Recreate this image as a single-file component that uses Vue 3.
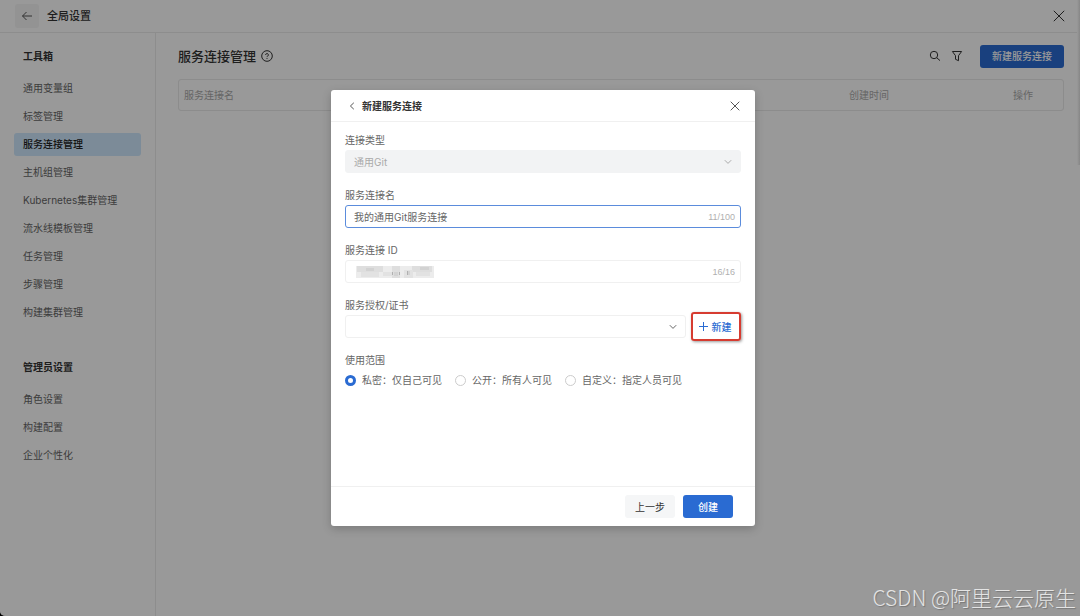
<script setup>
import { ref } from 'vue'

const tools = [
  '通用变量组',
  '标签管理',
  '服务连接管理',
  '主机组管理',
  'Kubernetes集群管理',
  '流水线模板管理',
  '任务管理',
  '步骤管理',
  '构建集群管理',
]
const admin = ['角色设置', '构建配置', '企业个性化']
const active = '服务连接管理'

const name = ref('我的通用Git服务连接')
const scope = ref('private')
const scopes = [
  { value: 'private', label: '私密：仅自己可见' },
  { value: 'public', label: '公开：所有人可见' },
  { value: 'custom', label: '自定义：指定人员可见' },
]
</script>

<template>
  <div class="screen">
    <div class="page">
      <header class="topbar">
        <button class="back" type="button" aria-label="返回">
          <svg width="12" height="12" viewBox="0 0 12 12"><path d="M11 6H1.5M5.5 2 1.5 6l4 4" /></svg>
        </button>
        <h1>全局设置</h1>
        <button class="bare close-page" type="button" aria-label="关闭">
          <svg width="12" height="12" viewBox="0 0 12 12"><path d="M.8.8l10.400 10.400M11.200.8.8 11.200" /></svg>
        </button>
      </header>
      <div class="columns">
        <nav class="sidebar">
          <h2>工具箱</h2>
          <ul>
            <li v-for="t in tools" :key="t">
              <a href="#" :class="{ active: t === active }">{{ t }}</a>
            </li>
          </ul>
          <h2>管理员设置</h2>
          <ul>
            <li v-for="t in admin" :key="t"><a href="#">{{ t }}</a></li>
          </ul>
        </nav>
        <main>
          <div class="heading">
            <h2>服务连接管理</h2>
            <svg class="help" width="12" height="12" viewBox="0 0 12 12">
              <circle cx="6" cy="6" r="5.300" />
              <path d="M4.600 4.900a1.400 1.300 0 1 1 2.100 1.100c-.5.3-.7.500-.7 1.100M6 8v.9" />
            </svg>
            <button class="bare search" type="button" aria-label="搜索">
              <svg width="12" height="12" viewBox="0 0 12 12"><circle cx="5" cy="5" r="3.700" /><path d="M7.700 7.700 11 10.600" /></svg>
            </button>
            <button class="bare filter" type="button" aria-label="筛选">
              <svg width="12" height="12" viewBox="0 0 12 12"><path d="M1.400 1.500h9.200L7.500 5.700v5L4.500 9.300V5.700z" /></svg>
            </button>
            <button class="primary" type="button">新建服务连接</button>
          </div>
          <table>
            <thead>
              <tr>
                <th>服务连接名</th>
                <th class="time">创建时间</th>
                <th class="ops">操作</th>
              </tr>
            </thead>
          </table>
        </main>
      </div>
      <span class="scroll-shade"></span>
    </div>

    <div class="overlay">
      <section class="modal" role="dialog" aria-labelledby="dlg-title">
        <header class="modal-head">
          <button class="bare" type="button" aria-label="返回">
            <svg width="6" height="8" viewBox="0 0 6 8"><path d="M4.800.8 1.400 4l3.400 3.200" /></svg>
          </button>
          <h2 id="dlg-title">新建服务连接</h2>
          <button class="bare close" type="button" aria-label="关闭">
            <svg width="10" height="10" viewBox="0 0 10 10"><path d="M.7.7l8.600 8.600M9.300.7.7 9.300" /></svg>
          </button>
        </header>
        <form class="modal-body" @submit.prevent>
          <div class="field">
            <label for="type">连接类型</label>
            <div class="control disabled">
              <select id="type" disabled>
                <option>通用Git</option>
              </select>
              <svg class="chevron" width="8" height="6" viewBox="0 0 8 6"><path d="M.8 1.200 4 4.400l3.200-3.200" /></svg>
            </div>
          </div>
          <div class="field">
            <label for="name">服务连接名</label>
            <div class="control focused">
              <input id="name" v-model="name" type="text" maxlength="100" />
              <span class="count">11/100</span>
            </div>
          </div>
          <div class="field">
            <label for="cid">服务连接 ID</label>
            <div class="control">
              <input id="cid" type="text" maxlength="16" />
              <svg class="mask" width="80" height="14" viewBox="0 0 80 14" shape-rendering="crispEdges">
                <path fill="#ececec" d="M2 1h78v12H2z" />
                <path fill="#dedede" d="M3 1h26v6H3zM38 1h8v12h-8zM58 1h20v6H58z" />
                <path fill="#e2e2e2" d="M7 7h18v5H7zM29 7h9v4h-9zM50 5h9v8h-9zM62 7h14v4H62z" />
                <path fill="#d2d2d2" d="M12 3h8v3h-8zM40 7h4v4h-4zM53 6h3v4h-3zM66 2h9v3h-9z" />
                <path fill="#b0b0b0" d="M38 7h1v3h-1zM45 7h1v3h-1zM53 6h1v4h-1z" />
              </svg>
              <span class="count">16/16</span>
            </div>
          </div>
          <div class="field">
            <label for="cert">服务授权/证书</label>
            <div class="row">
              <div class="control">
                <select id="cert"><option></option></select>
                <svg class="chevron" width="8" height="6" viewBox="0 0 8 6"><path d="M.8 1.200 4 4.400l3.200-3.200" /></svg>
              </div>
              <button class="add" type="button">
                <svg width="9" height="9" viewBox="0 0 9 9"><path d="M4.500 0v9M0 4.500h9" /></svg>
                新建
              </button>
            </div>
          </div>
          <fieldset>
            <legend>使用范围</legend>
            <div class="radios">
              <label v-for="s in scopes" :key="s.value">
                <input v-model="scope" type="radio" name="scope" :value="s.value" />
                {{ s.label }}
              </label>
            </div>
          </fieldset>
        </form>
        <footer class="modal-foot">
          <button class="secondary" type="button">上一步</button>
          <button class="primary" type="button">创建</button>
        </footer>
      </section>
    </div>
    <span class="watermark">CSDN @阿里云云原生</span>
  </div>
</template>

<style>
body {
  background: #000;
}
</style>

<style scoped>
.screen {
  position: relative;
  min-height: 100vh;
  display: flex;
  flex-direction: column;
  overflow: hidden;
  border-bottom-left-radius: 5px;
  background: #fff;
  color: #333;
  font: 10px/16px Inter, "Noto Sans CJK SC", sans-serif;
}
* {
  box-sizing: border-box;
}
h1,
h2,
ul,
fieldset,
legend {
  margin: 0;
  padding: 0;
  border: 0;
  list-style: none;
}
button,
input,
select {
  font: inherit;
  color: inherit;
  margin: 0;
  padding: 0;
  border: 0;
  outline: 0;
  background: none;
}
svg {
  display: block;
  flex: none;
  fill: none;
  stroke: currentColor;
}
a {
  color: inherit;
  text-decoration: none;
}
.page {
  flex: 1;
  display: flex;
  flex-direction: column;
}
.topbar {
  display: flex;
  align-items: center;
  height: 33px;
  padding: 0 15px;
  border-bottom: 1px solid #ebebeb;
}
.back {
  display: grid;
  place-items: center;
  width: 24px;
  height: 24px;
  margin-right: 8px;
  border-radius: 3px;
  background: #f5f5f5;
  color: #555;
}
h1 {
  font-size: 11px;
  font-weight: 500;
}
.close-page {
  margin-left: auto;
}
.columns {
  flex: 1;
  display: flex;
}
.sidebar {
  width: 156px;
  flex: none;
  padding: 15px 14px;
  border-right: 1px solid #ebebeb;
}
.sidebar h2 {
  padding: 0 9px;
  font-size: 10px;
  font-weight: 700;
  color: #333;
}
.sidebar ul {
  display: grid;
  gap: 5px;
  margin: 13px 0 35px;
}
.sidebar a {
  display: block;
  padding: 0 9px;
  line-height: 23px;
  border-radius: 3px;
  color: #666;
}
.sidebar .active {
  background: #cfe8fd;
  font-weight: 500;
  color: #222;
}
main {
  flex: 1;
  padding: 11px 16px 0 22px;
}
.heading {
  display: flex;
  align-items: center;
  height: 24px;
}
.heading h2 {
  font-size: 13px;
  font-weight: 500;
}
.help {
  margin-left: 5px;
}
.search {
  margin: 0 10px 0 auto;
}
.primary {
  height: 23px;
  border-radius: 3px;
  background: #2a6bd2;
  color: #fff;
  font-weight: 500;
}
.heading .primary {
  margin-left: 17px;
  padding: 0 12px;
}
table {
  width: 100%;
  margin-top: 11px;
  table-layout: fixed;
  border-collapse: separate;
  border-spacing: 0;
  border: 1px solid #e9e9e9;
  border-radius: 3px;
}
th {
  height: 30px;
  padding: 0 5px;
  text-align: left;
  font-weight: 400;
  color: #aaa;
}
.time {
  width: 164px;
}
.ops {
  width: 55px;
}
.scroll-shade {
  position: absolute;
  top: 0;
  right: 0;
  width: 3px;
  height: 165px;
  background: linear-gradient(90deg, #fff, #e0e0e0);
}
.overlay {
  position: absolute;
  inset: 0;
  display: grid;
  place-items: center;
  padding-left: 6px;
  background: rgba(0, 0, 0, 0.4);
}
.modal {
  width: 424px;
  border-radius: 3px;
  background: #fff;
  box-shadow: 0 3px 10px rgba(0, 0, 0, 0.2);
}
.modal-head {
  display: flex;
  align-items: center;
  height: 32px;
  padding: 0 15px 0 18px;
  border-bottom: 1px solid #f0f0f0;
}
.modal-head h2 {
  margin-left: 7px;
  font-size: 10px;
  font-weight: 700;
}
.modal-head .bare {
  color: #555;
}
.close {
  margin-left: auto;
}
.modal-body {
  display: grid;
  align-content: start;
  gap: 14px;
  min-height: 364px;
  padding: 10px 14px;
  color: #666;
}
.field > label,
legend {
  display: block;
  height: 18px;
}
.row {
  display: flex;
  gap: 5px;
}
.control {
  position: relative;
  flex: 1;
  display: flex;
  align-items: center;
  height: 23px;
  border: 1px solid #f0f0f0;
  border-radius: 3px;
}
.control input,
.control select {
  flex: 1;
  min-width: 0;
  height: 21px;
  padding: 0 8px;
  appearance: none;
}
.control.disabled {
  border-color: #f2f3f4;
  background: #f2f3f4;
  color: #aaa;
}
.control.disabled select {
  opacity: 1;
}
.control.focused {
  border-color: #5b8cdc;
}
.chevron {
  margin-right: 8px;
}
.count {
  margin-right: 5px;
  font-family: "Liberation Sans", sans-serif;
  font-size: 9px;
  color: #b0b0b0;
}
.mask {
  position: absolute;
  left: 8px;
  top: 4px;
  stroke: none;
}
.add {
  position: relative;
  display: flex;
  align-items: center;
  justify-content: center;
  gap: 4px;
  width: 50px;
  padding-right: 2px;
  font-weight: 500;
  color: #2a6bd2;
}
.add::after {
  content: "";
  position: absolute;
  inset: -3px 0;
  border: 2px solid #d63b30;
  border-radius: 3px;
  box-shadow: 1px 1px 3px rgba(0, 0, 0, 0.4);
}
.radios {
  display: flex;
  gap: 13px;
  margin-top: 2px;
}
.radios label {
  display: flex;
  align-items: center;
  gap: 6px;
}
.radios input {
  width: 11px;
  height: 11px;
  appearance: none;
  border: 1px solid #ccc;
  border-radius: 50%;
}
.radios input:checked {
  border: 3px solid #2a6bd2;
}
.modal-foot {
  display: flex;
  justify-content: flex-end;
  gap: 8px;
  height: 40px;
  padding: 8px 22px;
  border-top: 1px solid #f0f0f0;
}
.modal-foot button {
  width: 50px;
  height: 23px;
}
.secondary {
  border-radius: 3px;
  background: #f5f6f7;
}
.watermark {
  position: absolute;
  right: 4px;
  bottom: 5px;
  font: 21px/28px "Noto Sans CJK SC", sans-serif;
  font-weight: 300;
  color: #e4e4e4;
  text-shadow: 1px 1px 1px #777;
}
</style>
